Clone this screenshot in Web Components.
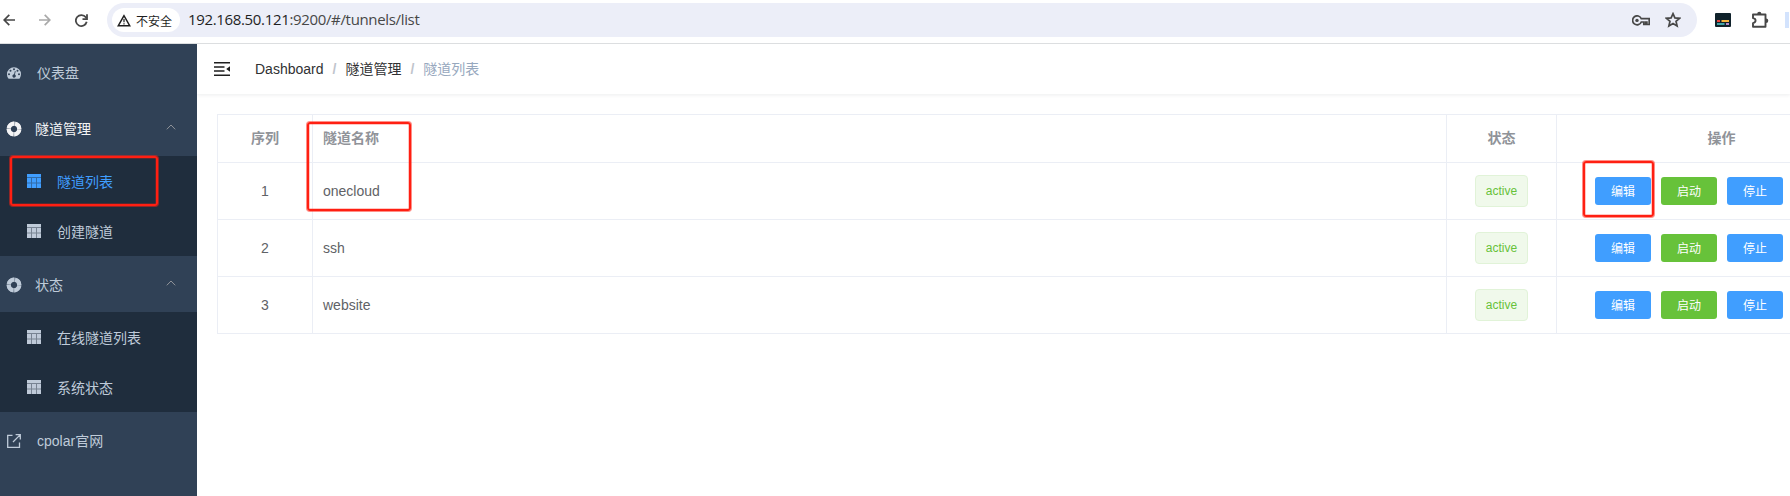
<!DOCTYPE html>
<html lang="zh-CN">
<head>
<meta charset="utf-8">
<title>隧道列表</title>
<style>
    html, body {
        margin: 0;
        height: 100%;
        overflow: hidden;
        background: #fff;
    }
    body {
        font-family: "Liberation Sans", "Noto Sans CJK SC", sans-serif;
        font-size: 14px;
        color: #606266;
    }
</style>
</head>
<body>
<tunnel-app></tunnel-app>

<script>
const icons = {
    dashboard: `<svg width="14" height="12" viewBox="0 0 14 12"><path fill="currentColor" fill-rule="evenodd" d="M7 .2a7 7 0 0 0-7 7c0 1.500.4 2.900 1.150 4.100.2.300.4.4.7.4h10.300c.3 0 .5-.1.700-.4A7.600 7.600 0 0 0 14 7.200a7 7 0 0 0-7-7zM2 6.200a1 1 0 1 1 0 2 1 1 0 0 1 0-2zm1.500-3.500a1 1 0 1 1 0 2 1 1 0 0 1 0-2zM7 1.200a1 1 0 1 1 0 2 1 1 0 0 1 0-2zm3.500 1.500a1 1 0 1 1 0 2 1 1 0 0 1 0-2zM12 6.200a1 1 0 1 1 0 2 1 1 0 0 1 0-2zM7.900 4l.8.200-.8 3.300a1.700 1.700 0 1 1-.8-.200z"/></svg>`,
    ring: `<svg width="16" height="16" viewBox="0 0 16 16" fill="none" stroke="currentColor" stroke-width="4.200"><circle cx="8" cy="8" r="5.300" opacity=".6"/><circle cx="8" cy="8" r="5.300" stroke-dasharray="7.300 1.025" stroke-dashoffset="-.512"/></svg>`,
    table: `<svg width="14" height="14" viewBox="0 0 14 14" fill="currentColor"><path d="M0 0h14v3H0zM0 4h4v4.500H0zM5 4h4v4.500H5zM10 4h4v4.500h-4zM0 9.500h4V14H0zM5 9.500h4V14H5zM10 9.500h4V14h-4z"/><path opacity=".55" d="M0 3h14v11H0z"/></svg>`,
    link: `<svg width="14" height="14" viewBox="0 0 14 14" fill="none" stroke="currentColor" stroke-width="1.300"><path d="M5.500 1.300H.7v12h11.800V8.500M6 8l6.600-6.600M8.600.7h4.700v4.700"/></svg>`,
    up: `<svg width="10" height="6" viewBox="0 0 10 6" fill="none" stroke="#909399" stroke-width="1"><path d="M.8 5.300 5 1l4.200 4.300"/></svg>`,
    fold: `<svg width="16" height="14" viewBox="0 0 16 14" fill="#1f1f1f"><path d="M0 0h16v1.500H0zM0 4.200h10.500v1.500H0zM0 8.300h10.500v1.500H0zM0 12.500h16V14H0zM12.200 7 16 4.200v5.600z"/></svg>`,
    back: `<svg width="12" height="12" viewBox="0 0 12 12" fill="none" stroke="#474747" stroke-width="1.700"><path d="M12 6H1.500M6.300.8 1.200 6l5.100 5.200"/></svg>`,
    forward: `<svg width="12" height="12" viewBox="0 0 12 12" fill="none" stroke="#a9a9a9" stroke-width="1.700"><path d="M0 6h10.500M5.700.8 10.800 6l-5.100 5.200"/></svg>`,
    reload: `<svg width="13" height="13" viewBox="0 0 13 13" fill="none" stroke="#474747" stroke-width="1.800"><path d="M11.700 7.800a5.500 5.500 0 1 1-.9-4.500l.9 1.200"/><path d="M12 .2v5H7.500"/></svg>`,
    warn: `<svg width="14" height="13" viewBox="0 0 14 13" fill="none" stroke="#1f1f1f" stroke-width="1.500"><path d="M7 1.700 1.300 11.700h11.400z"/><path d="M7 5v3.300M7 9.300v1.300" stroke-width="1.200"/></svg>`,
    key: `<svg width="18" height="11" viewBox="0 0 18 11" fill="none" stroke="#474747" stroke-width="1.700"><path d="M9.300 3.700A4.500 4.500 0 1 0 9.300 7h2.500v2.500h1.800V7.200h1.300v2.300h2.300V3.700z"/><circle cx="5" cy="5.400" r="1.700" fill="#474747" stroke="none"/></svg>`,
    star: `<svg width="16" height="16" viewBox="0 0 16 16" fill="none" stroke="#474747" stroke-width="1.700"><path d="m8 1.700 1.900 4.200 4.600.4-3.500 3 1.100 4.600L8 11.400l-4.100 2.500L5 9.300l-3.500-3 4.600-.4z"/></svg>`,
    card: `<svg width="16" height="14" viewBox="0 0 16 14"><rect width="16" height="14" rx="1" fill="#10222b"/><path fill="#e8443c" d="M2 7h3v2H2z"/><path fill="#f5b33c" d="M6.500 7H14v2H6.500z"/><path fill="#41a5a6" d="M2 10h7.500v2H2z"/><path fill="#b58bcb" d="M11 10h3v2h-3z"/></svg>`,
    puzzle: `<svg width="18" height="18" viewBox="0 0 18 18" fill="none" stroke="#474747" stroke-width="1.900"><path d="M2 3.500h12.500v12.300H2v-3.700c3.400-.5 3.400-4.500 0-5z" stroke-linejoin="round"/><path fill="#474747" stroke="none" d="M6.200 3a2.100 2.300 0 0 1 4.200 0zM15 7.500a2.300 2.200 0 0 1 0 4.400z"/></svg>`
};

class BaseElement extends HTMLElement {
    connectedCallback() {
        this.attachShadow({ mode: "open" }).innerHTML = this.render();
    }
}

class UiIcon extends BaseElement {
    render() {
        return `<style>
            :host { display: inline-flex; flex: none; }
            svg { display: block; }
        </style>${icons[this.getAttribute("name")]}`;
    }
}
customElements.define("ui-icon", UiIcon);

class BrowserBar extends BaseElement {
    render() {
        return `
        <style>
            :host {
                box-sizing: border-box;
                display: flex;
                align-items: center;
                height: 44px;
                padding: 0 0 3px 3px;
                border-bottom: 1px solid #dcdee0;
                background: #fff;
            }
            .nav { display: flex; gap: 24px; align-items: center; width: 104px; flex: none; }
            .address {
                box-sizing: border-box;
                display: flex;
                align-items: center;
                width: 1590px;
                height: 34px;
                padding: 0 16px 0 5px;
                border-radius: 17px;
                background: #eceef8;
                flex: none;
            }
            .chip {
                box-sizing: border-box;
                display: flex;
                align-items: center;
                gap: 5px;
                width: 68px;
                height: 24px;
                padding-left: 5px;
                border-radius: 12px;
                background: #fff;
                font-size: 12px;
                color: #1f1f1f;
                white-space: nowrap;
            }
            .url {
                flex: 1;
                margin-left: 8px;
                padding-bottom: 2px;
                font: 15px/20px "Open Sans", sans-serif;
                letter-spacing: -.34px;
                color: #474747;
            }
            .url b { font-weight: normal; color: #1f1f1f; }
            .tools { display: flex; gap: 15px; align-items: center; }
            .ext { display: flex; align-items: center; gap: 20px; margin-left: 18px; }
            .edge { width: 4px; height: 16px; margin-left: 16px; background: #d3e3fd; }
        </style>
        <div class="nav">
            <ui-icon name="back"></ui-icon>
            <ui-icon name="forward"></ui-icon>
            <ui-icon name="reload"></ui-icon>
        </div>
        <div class="address">
            <div class="chip"><ui-icon name="warn"></ui-icon><span>不安全</span></div>
            <div class="url"><b>192.168.50.121</b>:9200/#/tunnels/list</div>
            <div class="tools"><ui-icon name="key"></ui-icon><ui-icon name="star"></ui-icon></div>
        </div>
        <div class="ext"><ui-icon name="card"></ui-icon><ui-icon name="puzzle"></ui-icon></div>
        <div class="edge"></div>`;
    }
}
customElements.define("browser-bar", BrowserBar);

class MenuItem extends BaseElement {
    render() {
        const arrow = this.hasAttribute("open") ? `<ui-icon class="arrow" name="up"></ui-icon>` : "";
        return `
        <style>
            :host {
                box-sizing: border-box;
                display: flex;
                align-items: center;
                height: 56px;
                padding: 2px 21px 0 7px;
                color: #bfcbd9;
                white-space: nowrap;
            }
            :host([open]) { padding: 2px 21px 0 6px; }
            :host([sub]) { height: 50px; padding: 0 0 0 27px; background: #1f2d3d; }
            :host([current]) { color: #f4f4f5; }
            :host([active]) { color: #409eff; }
            .label { flex: 1; margin-left: 16px; line-height: 20px; }
            :host([open]) .label { margin-left: 13px; }
            :host([sub]) .label { padding-top: 2px; }
            .arrow { margin-bottom: 5px; }
        </style>
        <ui-icon name="${this.getAttribute("icon")}"></ui-icon>
        <span class="label"><slot></slot></span>${arrow}`;
    }
}
customElements.define("menu-item", MenuItem);

class SideMenu extends BaseElement {
    render() {
        return `
        <style>
            :host { display: block; width: 197px; flex: none; background: #304156; }
        </style>
        <slot></slot>`;
    }
}
customElements.define("side-menu", SideMenu);

class NavBar extends BaseElement {
    render() {
        return `
        <style>
            :host {
                box-sizing: border-box;
                display: flex;
                align-items: center;
                height: 50px;
                padding: 0 0 1px 17px;
                box-shadow: 0 1px 4px rgba(0, 21, 41, .08);
                color: #303133;
                white-space: nowrap;
            }
            .crumbs { display: flex; margin-left: 25px; line-height: 20px; padding-top: 1px; }
            i { margin: 0 9px; font-style: normal; font-weight: bold; color: #c0c4cc; }
            .last { color: #97a8be; }
        </style>
        <ui-icon name="fold"></ui-icon>
        <div class="crumbs">
            <span>Dashboard</span><i>/</i><span>隧道管理</span><i>/</i><span class="last">隧道列表</span>
        </div>`;
    }
}
customElements.define("nav-bar", NavBar);

class UiTag extends BaseElement {
    render() {
        return `
        <style>
            :host {
                box-sizing: border-box;
                display: inline-block;
                width: 53px;
                height: 32px;
                border: 1px solid #e1f3d8;
                border-radius: 4px;
                background: #f0f9eb;
                color: #67c23a;
                font-size: 12px;
                line-height: 30px;
                text-align: center;
            }
        </style><slot></slot>`;
    }
}
customElements.define("ui-tag", UiTag);

class UiButton extends BaseElement {
    render() {
        return `
        <style>
            :host { display: block; flex: none; }
            button {
                display: block;
                width: 56px;
                height: 28px;
                padding: 2px 0 0;
                border: 0;
                border-radius: 3px;
                background: #409eff;
                color: #fff;
                font-family: inherit;
                font-size: 12px;
                line-height: 26px;
            }
            :host([type="success"]) button { background: #67c23a; }
        </style>
        <button><slot></slot></button>`;
    }
}
customElements.define("ui-button", UiButton);

class TunnelTable extends BaseElement {
    render() {
        const rows = ["onecloud", "ssh", "website"].map((name, i) => `
            <div class="row">
                <div class="cell center">${i + 1}</div>
                <div class="cell">${name}</div>
                <div class="cell center"><ui-tag>active</ui-tag></div>
                <div class="cell actions">
                    <ui-button>编辑</ui-button>
                    <ui-button type="success">启动</ui-button>
                    <ui-button>停止</ui-button>
                </div>
            </div>`).join("");
        return `
        <style>
            :host {
                display: block;
                width: 1669px;
                border: solid #ebeef5;
                border-width: 1px 0 0 1px;
            }
            .row {
                display: grid;
                grid-template-columns: 95px 1134px 110px 330px;
                height: 57px;
            }
            .head { height: 48px; color: #909399; font-weight: bold; }
            .cell {
                box-sizing: border-box;
                display: flex;
                align-items: center;
                padding: 0 10px;
                border: solid #ebeef5;
                border-width: 0 1px 1px 0;
                line-height: 20px;
            }
            .head .cell { padding-bottom: 2px; }
            .center { justify-content: center; }
            .actions { padding-left: 38px; gap: 10px; }
        </style>
        <div class="row head">
            <div class="cell center">序列</div>
            <div class="cell">隧道名称</div>
            <div class="cell center">状态</div>
            <div class="cell center">操作</div>
        </div>${rows}`;
    }
}
customElements.define("tunnel-table", TunnelTable);

// red outline laid over the page, placed with --x --y --w --h
class MarkBox extends BaseElement {
    render() {
        return `
        <style>
            :host {
                position: absolute;
                box-sizing: border-box;
                left: var(--x);
                top: var(--y);
                width: var(--w);
                height: var(--h);
                border: 2px solid #ff1f12;
                border-radius: 3px;
                box-shadow: 0 0 0 1px rgba(255, 31, 18, .5), inset 0 0 0 .5px rgba(255, 31, 18, .5);
                pointer-events: none;
            }
        </style>`;
    }
}
customElements.define("mark-box", MarkBox);

class TunnelApp extends BaseElement {
    render() {
        return `
        <style>
            :host { display: flex; flex-direction: column; height: 100vh; position: relative; overflow: hidden; }
            .body { display: flex; flex: 1; min-height: 0; }
            main { flex: 1; min-width: 0; overflow: hidden; }
            tunnel-table { margin: 20px 0 0 20px; }
        </style>
        <browser-bar></browser-bar>
        <div class="body">
            <side-menu>
                <menu-item icon="dashboard">仪表盘</menu-item>
                <menu-item icon="ring" open current>隧道管理</menu-item>
                <menu-item icon="table" sub active>隧道列表</menu-item>
                <menu-item icon="table" sub>创建隧道</menu-item>
                <menu-item icon="ring" open>状态</menu-item>
                <menu-item icon="table" sub>在线隧道列表</menu-item>
                <menu-item icon="table" sub>系统状态</menu-item>
                <menu-item icon="link">cpolar官网</menu-item>
            </side-menu>
            <main>
                <nav-bar></nav-bar>
                <tunnel-table></tunnel-table>
            </main>
        </div>
        <mark-box style="--x: 10px; --y: 156px; --w: 148px; --h: 50px"></mark-box>
        <mark-box style="--x: 307px; --y: 122px; --w: 104px; --h: 89px"></mark-box>
        <mark-box style="--x: 1583px; --y: 161px; --w: 71px; --h: 56px"></mark-box>`;
    }
}
customElements.define("tunnel-app", TunnelApp);
</script>
</body>
</html>
